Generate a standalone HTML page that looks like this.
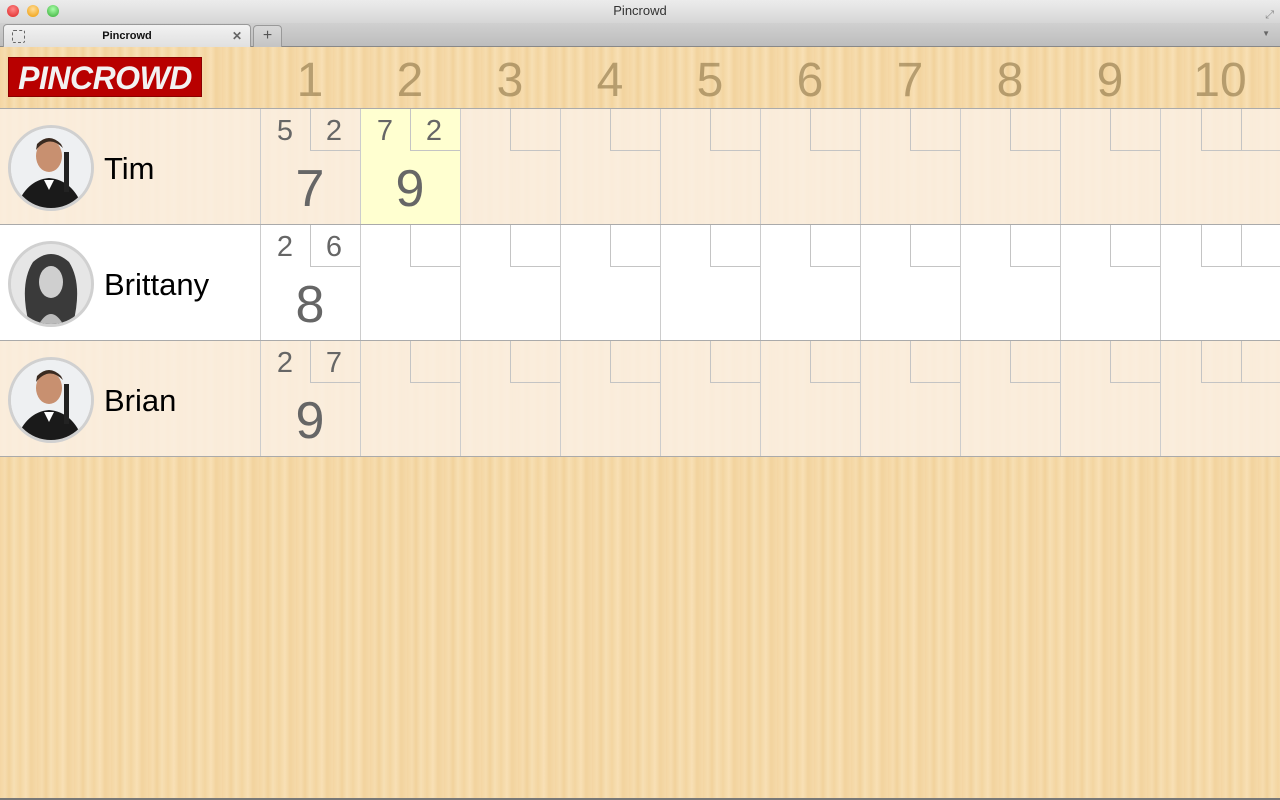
<!DOCTYPE html>
<html><head><meta charset="utf-8"><style>
*{margin:0;padding:0;box-sizing:border-box}
body{width:1280px;height:800px;overflow:hidden;font-family:"Liberation Sans",sans-serif;position:relative;
background:repeating-linear-gradient(90deg,#f4d6a3 0,#f6dcae 5px,#f1d29c 9px,#f7dfb3 14px,#f3d5a1 20px,#f8e0b5 26px,#f2d39e 31px,#f5d9a8 37px)}
.titlebar{position:absolute;left:0;top:0;width:1280px;height:23px;background:linear-gradient(#ececec,#d6d6d6);text-align:center;font-size:13px;color:#333;line-height:22px}
.tl{position:absolute;top:5px;width:12px;height:12px;border-radius:50%}
.tabbar{position:absolute;left:0;top:23px;width:1280px;height:24px;background:linear-gradient(#d0d0d0,#bdbdbd);border-bottom:1px solid #888}
.tab{position:absolute;left:3px;top:1px;width:248px;height:23px;background:linear-gradient(#f2f2f2,#e0e0e0);border:1px solid #999;border-bottom:none;border-radius:4px 4px 0 0;font-size:11px;font-weight:bold;text-align:center;line-height:22px;color:#111}
.plus{position:absolute;left:253px;top:2px;width:29px;height:22px;background:linear-gradient(#d8d8d8,#c4c4c4);border:1px solid #999;border-bottom:none;border-radius:4px 4px 0 0;text-align:center;font-size:16px;line-height:20px;color:#555}
.header{position:absolute;left:0;top:47px;width:1280px;height:62px;border-bottom:1px solid #aaa}
.logo{position:absolute;left:8px;top:10px;width:194px;height:40px;background:#b80000;border:1px solid #8a0000;color:#f2f2f2;font-weight:bold;font-style:italic;font-size:32px;letter-spacing:-0.5px;text-align:center;line-height:40px}
.num{position:absolute;top:6px;width:100px;text-align:center;font-size:48px;color:rgba(130,105,60,0.55);font-family:"Liberation Sans",sans-serif}
.row{position:absolute;left:0;width:1280px;height:116px;border-bottom:1px solid #aaa}
.row.w{background:rgba(250,240,228,0.85)}
.row.white{background:#fff}
.cell{position:absolute;top:0;height:115px;border-left:1px solid #ccc}
.box{position:absolute;top:0;height:42px;border-left:1px solid #c4c4c4;border-bottom:1px solid #c4c4c4}
.sm{position:absolute;top:6px;font-size:29px;color:#666;width:48px;text-align:center;font-family:"Liberation Sans",sans-serif}
.big{position:absolute;top:50px;left:0;width:98px;text-align:center;font-size:52px;color:#666;font-family:"Liberation Sans",sans-serif}
.av{position:absolute;left:8px;top:16px;width:86px;height:86px;border-radius:50%;border:3px solid #d0d0d0;background:#f0f0f0;overflow:hidden}
.name{position:absolute;left:104px;top:42px;font-size:31px;color:#000;font-family:"Liberation Sans",sans-serif}
</style></head><body>
<div class="titlebar">Pincrowd
<div class="tl" style="left:7px;background:radial-gradient(circle at 50% 35%,#f88,#d22)"></div>
<div class="tl" style="left:27px;background:radial-gradient(circle at 50% 35%,#fd9,#e90)"></div>
<div class="tl" style="left:47px;background:radial-gradient(circle at 50% 35%,#afa,#3a3)"></div>
<div style="position:absolute;right:6px;top:4px;font-size:11px;color:#888">⤢</div>
</div>
<div class="tabbar">
<div class="tab"><span style="position:absolute;left:8px;top:5px;width:13px;height:13px;border:1px dashed #666;border-radius:2px"></span>Pincrowd<span style="position:absolute;right:8px;top:0;color:#666;font-size:12px">✕</span></div>
<div class="plus">+</div>
<div style="position:absolute;right:10px;top:6px;font-size:8px;color:#666">▼</div>
</div>
<div class="header">
<div class="logo">PINCROWD</div>
<div class="num" style="left:260px">1</div><div class="num" style="left:360px">2</div><div class="num" style="left:460px">3</div><div class="num" style="left:560px">4</div><div class="num" style="left:660px">5</div><div class="num" style="left:760px">6</div><div class="num" style="left:860px">7</div><div class="num" style="left:960px">8</div><div class="num" style="left:1060px">9</div><div class="num" style="left:1160px;width:120px">10</div>
</div>

<div class="row w" style="top:109px">
<div class="av"><svg width="80" height="80"><rect width="80" height="80" fill="#eef0f2"/><ellipse cx="38" cy="28" rx="13" ry="16" fill="#c89070"/><path d="M25 22 Q38 6 52 20 L50 16 Q38 4 26 16Z" fill="#3a2a20"/><path d="M5 80 Q15 52 38 50 Q62 52 72 80Z" fill="#1a1a1a"/><path d="M33 52 L43 52 L38 62Z" fill="#fff"/><rect x="53" y="24" width="5" height="40" fill="#222"/></svg></div>
<div class="name">Tim</div>
<div class="cell" style="left:260px;width:100px"><div class="box" style="left:49px;width:51px"></div><div class="sm" style="left:0">5</div><div class="sm" style="left:49px">2</div><div class="big">7</div></div>
<div class="cell" style="left:360px;width:100px;background:#ffffd0"><div class="box" style="left:49px;width:51px"></div><div class="sm" style="left:0">7</div><div class="sm" style="left:49px">2</div><div class="big">9</div></div>
<div class="cell" style="left:460px;width:100px"><div class="box" style="left:49px;width:51px"></div></div>
<div class="cell" style="left:560px;width:100px"><div class="box" style="left:49px;width:51px"></div></div>
<div class="cell" style="left:660px;width:100px"><div class="box" style="left:49px;width:51px"></div></div>
<div class="cell" style="left:760px;width:100px"><div class="box" style="left:49px;width:51px"></div></div>
<div class="cell" style="left:860px;width:100px"><div class="box" style="left:49px;width:51px"></div></div>
<div class="cell" style="left:960px;width:100px"><div class="box" style="left:49px;width:51px"></div></div>
<div class="cell" style="left:1060px;width:100px"><div class="box" style="left:49px;width:51px"></div></div>
<div class="cell" style="left:1160px;width:120px"><div class="box" style="left:40px;width:40px"></div><div class="box" style="left:80px;width:40px"></div></div>
</div>

<div class="row white" style="top:225px">
<div class="av" style="background:#ddd"><svg width="80" height="80"><rect width="80" height="80" fill="#e6e6e6"/><path d="M18 80 Q8 40 22 18 Q40 2 58 18 Q72 40 62 80Z" fill="#3a3a3a"/><ellipse cx="40" cy="38" rx="12" ry="16" fill="#cfcfcf"/><path d="M28 80 Q40 60 52 80Z" fill="#bbb"/></svg></div>
<div class="name">Brittany</div>
<div class="cell" style="left:260px;width:100px"><div class="box" style="left:49px;width:51px"></div><div class="sm" style="left:0">2</div><div class="sm" style="left:49px">6</div><div class="big">8</div></div>
<div class="cell" style="left:360px;width:100px"><div class="box" style="left:49px;width:51px"></div></div>
<div class="cell" style="left:460px;width:100px"><div class="box" style="left:49px;width:51px"></div></div>
<div class="cell" style="left:560px;width:100px"><div class="box" style="left:49px;width:51px"></div></div>
<div class="cell" style="left:660px;width:100px"><div class="box" style="left:49px;width:51px"></div></div>
<div class="cell" style="left:760px;width:100px"><div class="box" style="left:49px;width:51px"></div></div>
<div class="cell" style="left:860px;width:100px"><div class="box" style="left:49px;width:51px"></div></div>
<div class="cell" style="left:960px;width:100px"><div class="box" style="left:49px;width:51px"></div></div>
<div class="cell" style="left:1060px;width:100px"><div class="box" style="left:49px;width:51px"></div></div>
<div class="cell" style="left:1160px;width:120px"><div class="box" style="left:40px;width:40px"></div><div class="box" style="left:80px;width:40px"></div></div>
</div>

<div class="row w" style="top:341px">
<div class="av"><svg width="80" height="80"><rect width="80" height="80" fill="#eef0f2"/><ellipse cx="38" cy="28" rx="13" ry="16" fill="#c89070"/><path d="M25 22 Q38 6 52 20 L50 16 Q38 4 26 16Z" fill="#3a2a20"/><path d="M5 80 Q15 52 38 50 Q62 52 72 80Z" fill="#1a1a1a"/><path d="M33 52 L43 52 L38 62Z" fill="#fff"/><rect x="53" y="24" width="5" height="40" fill="#222"/></svg></div>
<div class="name">Brian</div>
<div class="cell" style="left:260px;width:100px"><div class="box" style="left:49px;width:51px"></div><div class="sm" style="left:0">2</div><div class="sm" style="left:49px">7</div><div class="big">9</div></div>
<div class="cell" style="left:360px;width:100px"><div class="box" style="left:49px;width:51px"></div></div>
<div class="cell" style="left:460px;width:100px"><div class="box" style="left:49px;width:51px"></div></div>
<div class="cell" style="left:560px;width:100px"><div class="box" style="left:49px;width:51px"></div></div>
<div class="cell" style="left:660px;width:100px"><div class="box" style="left:49px;width:51px"></div></div>
<div class="cell" style="left:760px;width:100px"><div class="box" style="left:49px;width:51px"></div></div>
<div class="cell" style="left:860px;width:100px"><div class="box" style="left:49px;width:51px"></div></div>
<div class="cell" style="left:960px;width:100px"><div class="box" style="left:49px;width:51px"></div></div>
<div class="cell" style="left:1060px;width:100px"><div class="box" style="left:49px;width:51px"></div></div>
<div class="cell" style="left:1160px;width:120px"><div class="box" style="left:40px;width:40px"></div><div class="box" style="left:80px;width:40px"></div></div>
</div>
<div style="position:absolute;left:0;top:798px;width:1280px;height:2px;background:#777"></div>
</body></html>
